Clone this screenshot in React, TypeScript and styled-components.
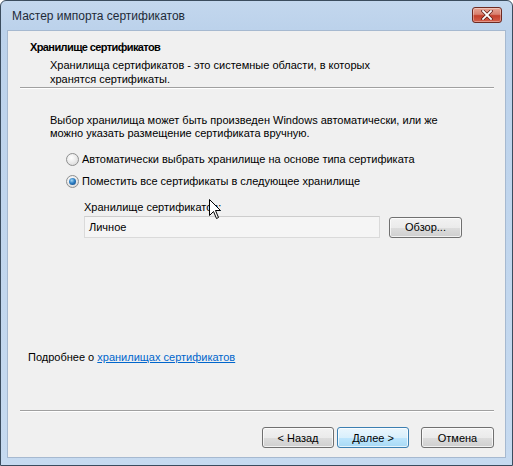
import React from 'react';
import styled, { createGlobalStyle } from 'styled-components';

const GlobalStyle = createGlobalStyle`
  html, body {
    margin: 0;
    padding: 0;
    background: #ffffff;
  }
  body {
    font-family: 'Liberation Sans', 'Noto Sans', sans-serif;
    font-size: 11px;
    color: #000;
  }
`;

const Window = styled.div`
  position: relative;
  box-sizing: border-box;
  width: 513px;
  height: 466px;
  display: flex;
  flex-direction: column;
  border: 1px solid #3b4c5e;
  border-radius: 6px 6px 0 0;
  background: linear-gradient(180deg, #c3d7ee 0%, #bcd2eb 6%, #c6daf0 100%);
  overflow: hidden;
`;

const TitleBar = styled.div`
  height: 29px;
  display: flex;
  align-items: center;
  padding: 0 10px 0 11px;
  flex-shrink: 0;
`;

const Title = styled.span`
  flex: 1;
  font-size: 12px;
  color: #1e2a38;
  margin-top: 1px;
`;

const CloseButton = styled.div`
  box-sizing: border-box;
  width: 30px;
  height: 16px;
  margin-top: -2px;
  border: 1px solid #6d2a22;
  border-radius: 3px;
  background: linear-gradient(180deg, #e8a494 0%, #d8806f 45%, #c4402c 55%, #d4604c 100%);
  display: flex;
  align-items: center;
  justify-content: center;
  box-shadow: inset 0 0 0 1px rgba(255, 255, 255, 0.35);
`;

const Client = styled.div`
  flex: 1;
  margin: 0 6px 7px 6px;
  background: #f0f0f0;
  border: 1px solid #a6b9d0;
  display: flex;
  flex-direction: column;
  padding: 0 11px 9px 12px;
`;

const Header = styled.div`
  padding: 9px 0 0 10px;
`;

const HeaderTitle = styled.div`
  font-weight: bold;
  font-size: 11px;
  letter-spacing: -0.6px;
  line-height: 15px;
`;

const HeaderText = styled.div`
  margin: 3px 0 0 20px;
  line-height: 14px;
`;

const Separator = styled.div<{ $top: number }>`
  height: 1px;
  background: #a0a0a0;
  border-bottom: 1px solid #ffffff;
  margin-top: ${p => p.$top}px;
`;

const Body = styled.div`
  flex: 1;
  padding-left: 30px;
`;

const Paragraph = styled.div`
  margin-top: 25px;
  line-height: 13px;
`;

const Options = styled.div`
  margin: 11px 0 0 16px;
  display: flex;
  flex-direction: column;
  gap: 6px;
`;

const RadioRow = styled.label`
  display: flex;
  align-items: center;
  gap: 3px;
  height: 16px;
`;

const RadioCircle = styled.span<{ $checked?: boolean }>`
  box-sizing: border-box;
  width: 13px;
  height: 13px;
  border-radius: 50%;
  border: 1px solid #8e8f8f;
  background: radial-gradient(circle at 40% 35%, #ffffff 0%, #e8e8e8 55%, #cfcfcf 100%);
  display: flex;
  align-items: center;
  justify-content: center;
  &::after {
    content: '';
    display: ${p => (p.$checked ? 'block' : 'none')};
    width: 7px;
    height: 7px;
    border-radius: 50%;
    background: radial-gradient(circle at 40% 35%, #a6d8f5 0%, #2d7fc4 45%, #0f3d78 100%);
  }
`;

const StoreBlock = styled.div`
  margin: 5px 0 0 18px;
`;

const FieldLabel = styled.div`
  line-height: 14px;
`;

const FieldRow = styled.div`
  display: flex;
  align-items: center;
  gap: 9px;
  margin-top: 2px;
`;

const TextBox = styled.div`
  box-sizing: border-box;
  width: 296px;
  height: 22px;
  border: 1px solid #dadada;
  border-top-color: #cdcdcd;
  background: #f5f5f5;
  padding: 0 4px;
  display: flex;
  align-items: center;
`;

const Button = styled.div<{ $default?: boolean; $width: number }>`
  box-sizing: border-box;
  width: ${p => p.$width}px;
  height: 21px;
  border-radius: 3px;
  border: 1px solid ${p => (p.$default ? '#3c7fb1' : '#707070')};
  background: ${p =>
    p.$default
      ? 'linear-gradient(180deg, #eaf6fd 0%, #d9f0fc 50%, #bee6fd 51%, #a7d9f5 100%)'
      : 'linear-gradient(180deg, #f2f2f2 0%, #ebebeb 50%, #dddddd 51%, #cfcfcf 100%)'};
  box-shadow: inset 0 0 0 1px rgba(255, 255, 255, 0.7);
  display: flex;
  align-items: center;
  justify-content: center;
`;

const LinkRow = styled.div`
  padding-left: 8px;
  line-height: 14px;
`;

const Link = styled.a`
  color: #0066cc;
  text-decoration: underline;
`;

const ButtonRow = styled.div`
  display: flex;
  justify-content: flex-end;
  margin-top: 15px;
`;

const Gap = styled.div<{ $w: number }>`
  width: ${p => p.$w}px;
`;

const Cursor = styled.svg`
  position: absolute;
  left: 208px;
  top: 198px;
`;

export default function App() {
  return (
    <>
      <GlobalStyle />
      <Window>
        <TitleBar>
          <Title>Мастер импорта сертификатов</Title>
          <CloseButton>
            <svg width="12" height="10" viewBox="0 0 12 10">
              <path d="M2 1 L10 9 M10 1 L2 9" stroke="#5a1a14" strokeWidth="3.2" strokeLinecap="square" />
              <path d="M2 1 L10 9 M10 1 L2 9" stroke="#ffffff" strokeWidth="1.8" strokeLinecap="square" />
            </svg>
          </CloseButton>
        </TitleBar>
        <Client>
          <Header>
            <HeaderTitle>Хранилище сертификатов</HeaderTitle>
            <HeaderText>
              Хранилища сертификатов - это системные области, в которых
              <br />
              хранятся сертификаты.
            </HeaderText>
          </Header>
          <Separator $top={1} />
          <Body>
            <Paragraph>
              Выбор хранилища может быть произведен Windows автоматически, или же
              <br />
              можно указать размещение сертификата вручную.
            </Paragraph>
            <Options>
              <RadioRow>
                <RadioCircle />
                Автоматически выбрать хранилище на основе типа сертификата
              </RadioRow>
              <RadioRow>
                <RadioCircle $checked />
                Поместить все сертификаты в следующее хранилище
              </RadioRow>
              <StoreBlock>
                <FieldLabel>Хранилище сертификатов:</FieldLabel>
                <FieldRow>
                  <TextBox>Личное</TextBox>
                  <Button $width={73}>Обзор...</Button>
                </FieldRow>
              </StoreBlock>
            </Options>
          </Body>
          <LinkRow>
            Подробнее о <Link>хранилищах сертификатов</Link>
          </LinkRow>
          <Separator $top={46} />
          <ButtonRow>
            <Button $width={72}>&lt; Назад</Button>
            <Gap $w={3} />
            <Button $width={72} $default>Далее &gt;</Button>
            <Gap $w={12} />
            <Button $width={73}>Отмена</Button>
          </ButtonRow>
        </Client>
        <Cursor width="13" height="21" viewBox="0 0 13 21">
          <path
            d="M0.5 0.5 L0.5 16.5 L4.5 12.5 L7.5 19.5 L9.5 18.5 L6.5 11.5 L11.5 11.5 Z"
            fill="#ffffff"
            stroke="#000000"
            strokeWidth="1"
            strokeLinejoin="miter"
          />
        </Cursor>
      </Window>
    </>
  );
}
